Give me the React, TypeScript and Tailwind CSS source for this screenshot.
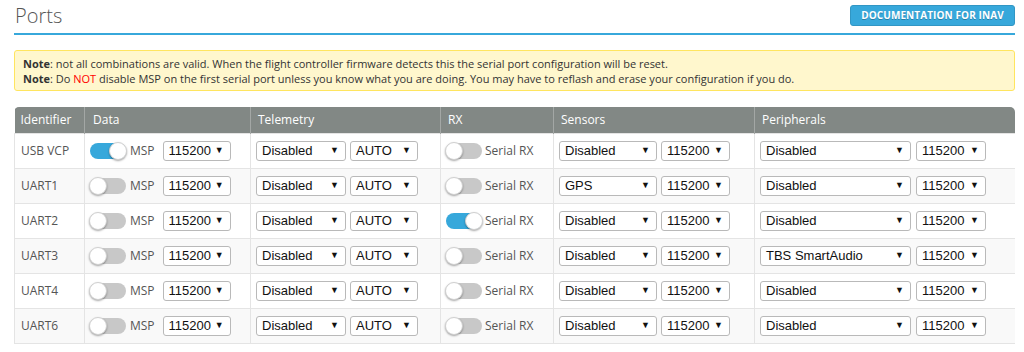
import React from 'react';

type Row = {
  id: string;
  msp: boolean;
  rx: boolean;
  sensor: string;
  peripheral: string;
};

const rows: Row[] = [
  { id: 'USB VCP', msp: true, rx: false, sensor: 'Disabled', peripheral: 'Disabled' },
  { id: 'UART1', msp: false, rx: false, sensor: 'GPS', peripheral: 'Disabled' },
  { id: 'UART2', msp: false, rx: true, sensor: 'Disabled', peripheral: 'Disabled' },
  { id: 'UART3', msp: false, rx: false, sensor: 'Disabled', peripheral: 'TBS SmartAudio' },
  { id: 'UART4', msp: false, rx: false, sensor: 'Disabled', peripheral: 'Disabled' },
  { id: 'UART6', msp: false, rx: false, sensor: 'Disabled', peripheral: 'Disabled' },
];

function Toggle({ on }: { on: boolean }) {
  return (
    <div
      className={`relative h-4 w-9 shrink-0 rounded-full ${on ? 'bg-[#37a8db]' : 'bg-[#c8c8c8]'}`}
    >
      <div
        className={`absolute -top-px h-[18px] w-[18px] rounded-full border border-[#d0d0d0] bg-white shadow-[0_1px_2px_rgba(0,0,0,0.35)] ${
          on ? '-right-px' : '-left-px'
        }`}
      />
    </div>
  );
}

function Select({ value, width }: { value: string; width: string }) {
  return (
    <div
      className={`${width} flex h-5 shrink-0 items-center justify-between rounded-[3px] border border-[#b9b9b9] bg-white pl-[5px] pr-[6px] text-[13px] text-[#111]`}
      style={{ fontFamily: '"Liberation Sans", Arial, sans-serif' }}
    >
      <span>{value}</span>
      <span className="text-[9px]">▼</span>
    </div>
  );
}

export default function App() {
  return (
    <div
      className="min-h-screen bg-white pl-[14px] pr-[9px] text-[#333]"
      style={{ fontFamily: '"Open Sans", sans-serif' }}
    >
      {/* Header */}
      <div className="flex items-start justify-between border-b-2 border-[#37a8db] pt-[3px] pb-[4px]">
        <h1 className="pl-px text-[20px] font-light leading-[26px] text-[#555]">Ports</h1>
        <button className="mt-[2px] h-[21px] w-[165px] rounded-[3px] border border-[#3196c4] bg-[#37a8db] text-[10px] font-bold tracking-[0.1px] text-white [text-shadow:0_1px_0_rgba(0,0,0,0.25)]">
          DOCUMENTATION FOR INAV
        </button>
      </div>

      {/* Note */}
      <div className="mt-[15px] rounded-[3px] border border-[#ffe55f] bg-[#fff7cd] px-[8px] pt-[5px] pb-[4px] text-[11px] leading-[15px] text-[#333]">
        <p>
          <b>Note</b>: not all combinations are valid. When the flight controller firmware detects this the serial port
          configuration will be reset.
        </p>
        <p>
          <b>Note</b>: Do <span className="text-[#ff0000]">NOT</span> disable MSP on the first serial port unless you
          know what you are doing. You may have to reflash and erase your configuration if you do.
        </p>
      </div>

      {/* Ports table */}
      <div className="mt-[16px] overflow-hidden rounded-t-[5px] border-b border-[#e4e4e4]">
        <table className="w-[1001px] table-fixed border-collapse text-[12px]">
          <colgroup>
            <col className="w-[70px]" />
            <col className="w-[166px]" />
            <col className="w-[190px]" />
            <col className="w-[113px]" />
            <col className="w-[201px]" />
            <col className="w-[261px]" />
          </colgroup>
          <thead>
            <tr className="h-[26px] bg-[#828885] text-left text-white">
              <th className="pl-[6px] font-normal">Identifier</th>
              <th className="border-l border-[#a3a7a5] pl-[8px] font-normal">Data</th>
              <th className="border-l border-[#a3a7a5] pl-[7px] font-normal">Telemetry</th>
              <th className="border-l border-[#a3a7a5] pl-[7px] font-normal">RX</th>
              <th className="border-l border-[#a3a7a5] pl-[7px] font-normal">Sensors</th>
              <th className="border-l border-[#a3a7a5] pl-[7px] font-normal">Peripherals</th>
            </tr>
          </thead>
          <tbody>
            {rows.map((r, i) => (
              <tr
                key={r.id}
                className={`h-[35px] border-t border-[#e4e4e4] ${i % 2 === 1 ? 'bg-[#f9f9f9]' : 'bg-white'}`}
              >
                <td className="border-l border-[#e4e4e4] pl-[6px] text-[#555]">{r.id}</td>
                <td className="border-l border-[#e4e4e4] pl-[5px]">
                  <div className="flex items-center">
                    <Toggle on={r.msp} />
                    <span className="ml-[4px] mr-[8px] text-[#555]">MSP</span>
                    <Select value="115200" width="w-[68px]" />
                  </div>
                </td>
                <td className="border-l border-[#e4e4e4] pl-[5px]">
                  <div className="flex items-center gap-[4px]">
                    <Select value="Disabled" width="w-[90px]" />
                    <Select value="AUTO" width="w-[68px]" />
                  </div>
                </td>
                <td className="border-l border-[#e4e4e4] pl-[5px]">
                  <div className="flex items-center">
                    <Toggle on={r.rx} />
                    <span className="ml-[3px] text-[#555]">Serial RX</span>
                  </div>
                </td>
                <td className="border-l border-[#e4e4e4] pl-[5px]">
                  <div className="flex items-center gap-[4px]">
                    <Select value={r.sensor} width="w-[98px]" />
                    <Select value="115200" width="w-[69px]" />
                  </div>
                </td>
                <td className="border-x border-[#e4e4e4] pl-[5px]">
                  <div className="flex items-center gap-[5px]">
                    <Select value={r.peripheral} width="w-[151px]" />
                    <Select value="115200" width="w-[70px]" />
                  </div>
                </td>
              </tr>
            ))}
          </tbody>
        </table>
      </div>
    </div>
  );
}
